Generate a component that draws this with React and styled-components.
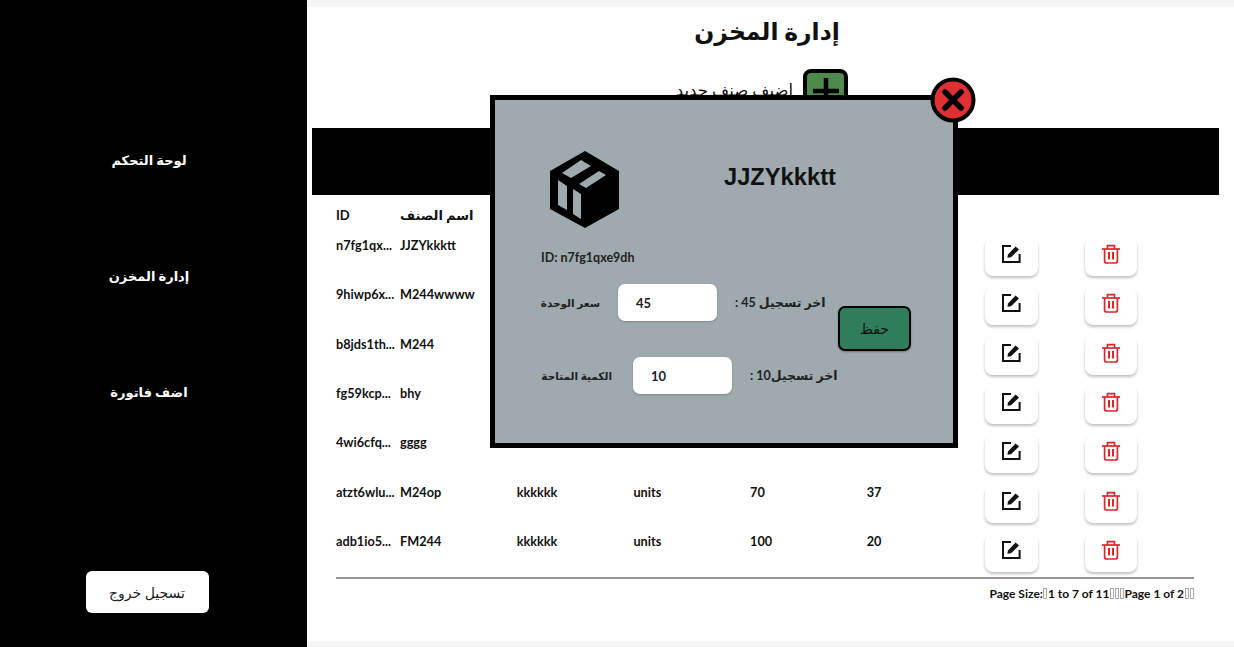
import React from 'react';
import styled, { createGlobalStyle } from 'styled-components';

const items = [
 { id: 'n7fg1qx...', name: 'JJZYkkktt', desc: 'kkkkkk', unit: 'units', qty: '10', price: '45' },
 { id: '9hiwp6x...', name: 'M244wwww', desc: 'kkkkkk', unit: 'units', qty: '50', price: '30' },
 { id: 'b8jds1th...', name: 'M244', desc: 'kkkkkk', unit: 'units', qty: '60', price: '25' },
 { id: 'fg59kcp...', name: 'bhy', desc: 'kkkkkk', unit: 'units', qty: '40', price: '15' },
 { id: '4wi6cfq...', name: 'gggg', desc: 'kkkkkk', unit: 'units', qty: '80', price: '12' },
 { id: 'atzt6wlu...', name: 'M24op', desc: 'kkkkkk', unit: 'units', qty: '70', price: '37' },
 { id: 'adb1io5...', name: 'FM244', desc: 'kkkkkk', unit: 'units', qty: '100', price: '20' },
];

const navLinks = ['لوحة التحكم', 'إدارة المخزن', 'اضف فاتورة'];

const BoxIcon = () => (
 <svg width='70' height='78' viewBox='0 0 70 78'>
  <path
   fillRule='evenodd'
   d='M35 0 L69 20 L69 58 L35 77 L0 58 L0 20 Z M12 22 L31 9 L41 15 L21 27 Z M29 33 L49 20 L56 24 L36 37 Z M8 29 L17 35 L17 59 L8 54 Z M23 38 L31 43 L31 68 L23 63 Z'
   fill='#000'
  />
 </svg>
);

const CloseIcon = () => (
 <svg width='46' height='46' viewBox='0 0 46 46'>
  <circle cx='23' cy='23' r='20.5' fill='#e03033' stroke='#000' strokeWidth='4' />
  <path d='M15 15 L31 31 M31 15 L15 31' stroke='#000' strokeWidth='5.5' strokeLinecap='round' />
 </svg>
);

const EditIcon = () => (
 <svg width='20' height='20' viewBox='0 0 20 20'>
  <path d='M10 2 H2 V18 H18.6 V10' fill='none' stroke='#111' strokeWidth='2' />
  <path d='M6.4 13.8 L7 10.4 L14.6 2.4 L18 5.6 L10 13.2 Z' fill='#111' />
 </svg>
);

const TrashIcon = () => (
 <svg width='20' height='20' viewBox='0 0 20 20' fill='none' stroke='#d9272e' strokeWidth='1.7'>
  <path d='M1 5 H19' />
  <path d='M6.5 5 V1.6 H13.5 V5' />
  <path d='M3.6 5 V17 Q3.6 19 5.6 19 H14.4 Q16.4 19 16.4 17 V5' />
  <path d='M8 8 V15.5 M12 8 V15.5' strokeWidth='2' />
 </svg>
);

const Tofu = () => <TofuBox />;

export default function App() {
 return (
  <Page>
   <GlobalStyle />
   <Sidebar>
    <NavList>
     {navLinks.map((link) => (
      <NavLink key={link} dir='rtl'>{link}</NavLink>
     ))}
    </NavList>
    <LogoutButton>تسجيل خروج</LogoutButton>
   </Sidebar>

   <Main>
    <Title dir='rtl'>إدارة المخزن</Title>
    <AddRow>
     <AddLabel dir='rtl'>اضيف صنف جديد</AddLabel>
     <AddButton>
      <svg width='36' height='36' viewBox='0 0 36 36'>
       <path d='M18 5 V31 M5 18 H31' stroke='#000' strokeWidth='4.5' />
      </svg>
     </AddButton>
    </AddRow>
    <BlackBar />

    <TableArea>
     <HeaderRow>
      <span>ID</span>
      <span>اسم الصنف</span>
      <span>الوصف</span>
      <span>الوحدة</span>
      <span>الكمية</span>
      <span>السعر</span>
     </HeaderRow>
     {items.map((item) => (
      <Row key={item.id}>
       <span>{item.id}</span>
       <span>{item.name}</span>
       <span>{item.desc}</span>
       <span>{item.unit}</span>
       <span>{item.qty}</span>
       <span>{item.price}</span>
       <ActionButton $w={53}><EditIcon /></ActionButton>
       <ActionButton $w={52}><TrashIcon /></ActionButton>
      </Row>
     ))}
     <Pager>
      Page Size:<Tofu />1 to 7 of 11<Tofu /><Tofu /><Tofu />Page 1 of 2<Tofu /><Tofu />
     </Pager>
    </TableArea>
   </Main>

   <Modal>
    <CloseSpot><CloseIcon /></CloseSpot>
    <ModalHead>
     <BoxIcon />
     <ItemName>JJZYkkktt</ItemName>
    </ModalHead>
    <ItemId>ID: n7fg1qxe9dh</ItemId>
    <ModalBody>
     <Fields>
      <FieldRow>
       <FieldLabel dir='rtl' $w={59} $gap={18}>سعر الوحدة</FieldLabel>
       <FieldInput defaultValue='45' />
       <LastEntry dir='rtl'>اخر تسجيل 45 :</LastEntry>
      </FieldRow>
      <FieldRow>
       <FieldLabel dir='rtl' $w={71} $gap={21}>الكمية المتاحة</FieldLabel>
       <FieldInput defaultValue='10' />
       <LastEntry dir='rtl'>اخر تسجيل10 :</LastEntry>
      </FieldRow>
     </Fields>
     <SaveButton>حفظ</SaveButton>
    </ModalBody>
   </Modal>
  </Page>
 );
}

const GlobalStyle = createGlobalStyle`
 html, body {
  margin: 0;
  padding: 0;
  background: #fff;
  overflow: hidden;
 }
 * {
  box-sizing: border-box;
 }
 body {
  font-family: 'Lato', 'Noto Sans', 'DejaVu Sans', sans-serif;
  color: #111;
 }
`;

const Page = styled.div`
 position: relative;
 display: grid;
 grid-template-columns: 307px 1fr;
 width: 1234px;
 height: 647px;
 overflow: hidden;
`;

const Sidebar = styled.aside`
 background: #000;
 display: flex;
 flex-direction: column;
 align-items: center;
 padding: 151px 0 34px;
 justify-content: space-between;
`;

const NavList = styled.nav`
 display: flex;
 flex-direction: column;
 gap: 98px;
 align-items: center;
 margin-left: -9px;
`;

const NavLink = styled.a`
 color: #fff;
 font-size: 13px;
 font-weight: 700;
 line-height: 18px;
`;

const LogoutButton = styled.button`
 width: 123px;
 height: 42px;
 margin-left: -13px;
 background: #fff;
 border: none;
 border-radius: 6px;
 color: #222;
 font: 500 14px 'Lato', 'Noto Sans', 'DejaVu Sans', sans-serif;
`;

const Main = styled.main`
 border-top: 7px solid #f5f5f5;
 border-bottom: 6px solid #f5f5f5;
 display: flex;
 flex-direction: column;
`;

const Title = styled.h1`
 margin: 6px 0 0;
 height: 49px;
 text-align: center;
 font-size: 23.5px;
 line-height: 36px;
 font-weight: 700;
 color: #111;
 padding-right: 7px;
`;

const AddRow = styled.div`
 display: flex;
 align-items: center;
 justify-content: flex-end;
 gap: 10px;
 height: 44px;
 margin-top: 7px;
 padding-right: 386px;
`;

const AddLabel = styled.span`
 font-size: 16.5px;
 font-weight: 500;
 margin-top: -2px;
`;

const AddButton = styled.div`
 width: 45px;
 height: 44px;
 background: #4f8a4d;
 border: 4px solid #000;
 border-radius: 8px;
 display: flex;
 align-items: center;
 justify-content: center;
`;

const BlackBar = styled.div`
 height: 67px;
 margin: 15px 15px 0 5px;
 background: #000;
 flex-shrink: 0;
`;

const TableArea = styled.section`
 padding: 0 40px 0 29px;
`;

const columns = '64px repeat(4, 116.7px) 117px 100px 100px';

const HeaderRow = styled.div`
 display: grid;
 grid-template-columns: ${columns};
 height: 37px;
 align-items: center;
 padding-top: 2px;
 font-size: 13px;
 font-weight: 700;
`;

const Row = styled.div`
 display: grid;
 grid-template-columns: ${columns};
 height: 49.33px;
 padding-top: 6px;
 align-items: start;
 font-size: 12.7px;
 font-weight: 700;
 line-height: 14px;
 white-space: nowrap;
`;

const ActionButton = styled.button`
 width: ${(p) => p.$w}px;
 height: 38px;
 margin-left: 1px;
 background: #fff;
 border: none;
 border-radius: 8px;
 box-shadow: 0 2px 3px rgba(0, 0, 0, 0.25);
 display: flex;
 align-items: center;
 justify-content: center;
 padding: 0 0 6px;
`;

const Pager = styled.div`
 border-top: 2px solid #999;
 height: 30px;
 display: flex;
 justify-content: flex-end;
 align-items: center;
 font-size: 12px;
 font-weight: 700;
 white-space: nowrap;
`;

const TofuBox = styled.i`
 display: inline-block;
 width: 4px;
 height: 11px;
 margin: 0 0.5px;
 border: 1px solid #aaa;
`;

const Modal = styled.div`
 position: absolute;
 left: 490px;
 top: 95px;
 width: 468px;
 height: 353px;
 background: #9eaaad;
 border: 5px solid #000;
 padding: 51px 42px 0 46px;
 display: flex;
 flex-direction: column;
`;

const CloseSpot = styled.div`
 position: absolute;
 top: -23px;
 right: -23px;
 width: 46px;
 height: 46px;
`;

const ModalHead = styled.div`
 display: flex;
 align-items: flex-start;
 padding-left: 9px;
`;

const ItemName = styled.h2`
 margin: 9px 0 0 104px;
 font: 700 23.7px/34px 'Liberation Sans', Arial, sans-serif;
 color: #111;
`;

const ItemId = styled.div`
 margin-top: 21px;
 font-size: 12.5px;
 line-height: 16px;
 font-weight: 700;
 color: #222;
`;

const ModalBody = styled.div`
 display: flex;
 align-items: flex-start;
 margin-top: 18px;
`;

const Fields = styled.div`
 display: flex;
 flex: none;
 width: 297px;
 flex-direction: column;
 gap: 36px;
`;

const FieldRow = styled.div`
 display: flex;
 align-items: center;
`;

const FieldLabel = styled.label`
 width: ${(p) => p.$w}px;
 margin-right: ${(p) => p.$gap}px;
 font-size: 10.5px;
 font-weight: 700;
 white-space: nowrap;
 color: #222;
`;

const FieldInput = styled.input`
 width: 99px;
 height: 37px;
 padding: 0 18px;
 border: none;
 border-radius: 7px;
 background: #fff;
 box-shadow: 0 1px 2px rgba(0, 0, 0, 0.2);
 font: 700 13px 'Lato', sans-serif;
 color: #222;
`;

const LastEntry = styled.span`
 margin-left: 18px;
 font-size: 12.5px;
 font-weight: 700;
 white-space: nowrap;
 color: #222;
`;

const SaveButton = styled.button`
 flex: none;
 width: 73px;
 height: 45px;
 margin-top: 22px;
 background: #2f7d5a;
 border: 2px solid #000;
 border-radius: 7px;
 box-shadow: 0 1px 2px rgba(0, 0, 0, 0.3);
 font: 500 14px 'Lato', 'Noto Sans', 'DejaVu Sans', sans-serif;
 color: #111;
`;
